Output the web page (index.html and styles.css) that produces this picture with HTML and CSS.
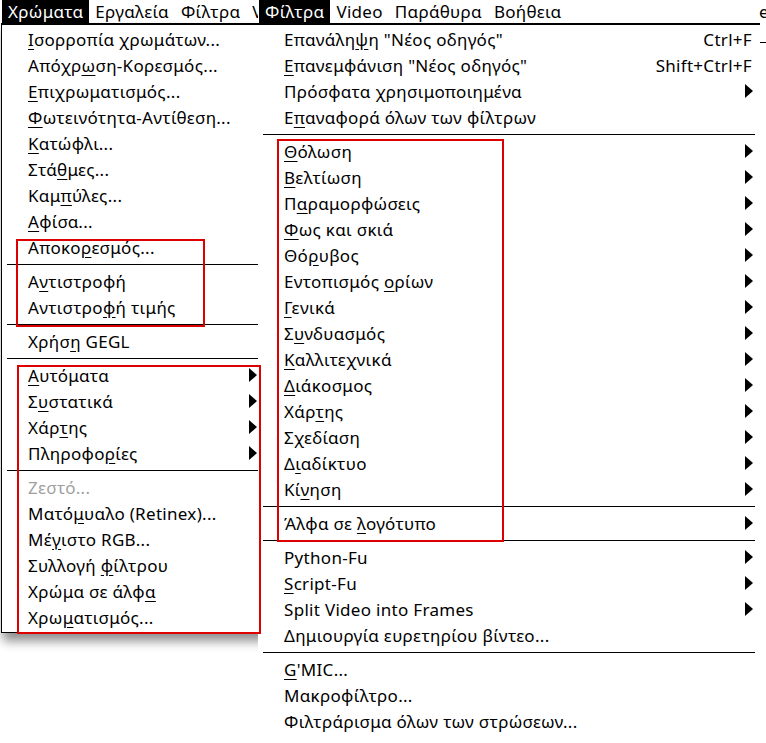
FILE: index.html
```html
<!DOCTYPE html>
<html lang="el">
<head>
    <meta charset="UTF-8">
    <title>GIMP - Χρώματα / Φίλτρα</title>
    <link rel="stylesheet" href="styles.css">
</head>
<body>
    <div class="canvas">
        <!-- αριστερό στιγμιότυπο: μενού Χρώματα -->
        <div class="shot shot-left">
            <div class="menubar">
                <span class="mb-item active">Χρώματα</span>
                <span class="mb-item">Εργαλεία</span>
                <span class="mb-item">Φίλτρα</span>
                <span class="mb-item">Video</span>
            </div>
            <div class="menu menu-left">
                <div class="item"><span><u>Ι</u>σορροπία χρωμάτων...</span></div>
                <div class="item"><span>Απόχρ<u>ω</u>ση-Κορεσμός...</span></div>
                <div class="item"><span><u>Ε</u>πιχρωματισμός...</span></div>
                <div class="item"><span><u>Φ</u>ωτεινότητα-Αντίθεση...</span></div>
                <div class="item"><span><u>Κ</u>ατώφλι...</span></div>
                <div class="item"><span>Στά<u>θ</u>μες...</span></div>
                <div class="item"><span>Καμ<u>π</u>ύλες...</span></div>
                <div class="item"><span><u>Α</u>φίσα...</span></div>
                <div class="item"><span>Αποκο<u>ρ</u>εσμός...</span></div>
                <div class="sep"></div>
                <div class="item"><span>Α<u>ν</u>τιστροφή</span></div>
                <div class="item"><span>Αντιστρο<u>φ</u>ή τιμής</span></div>
                <div class="sep"></div>
                <div class="item"><span>Χρήσ<u>η</u> GEGL</span></div>
                <div class="sep"></div>
                <div class="item"><span><u>Α</u>υτόματα</span><i class="arrow"></i></div>
                <div class="item"><span>Σ<u>υ</u>στατικά</span><i class="arrow"></i></div>
                <div class="item"><span>Χάρ<u>τ</u>ης</span><i class="arrow"></i></div>
                <div class="item"><span>Πληροφο<u>ρ</u>ίες</span><i class="arrow"></i></div>
                <div class="sep"></div>
                <div class="item disabled"><span>Ζεστό...</span></div>
                <div class="item"><span>Ματό<u>μ</u>υαλο (Retinex)...</span></div>
                <div class="item"><span>Μέ<u>γ</u>ιστο RGB...</span></div>
                <div class="item"><span>Συλλογή <u>φ</u>ίλτρου</span></div>
                <div class="item"><span>Χρώμα σε άλφ<u>α</u></span></div>
                <div class="item"><span>Χρω<u>μ</u>ατισμός...</span></div>
            </div>
        </div>

        <!-- δεξί στιγμιότυπο: μενού Φίλτρα -->
        <div class="shot shot-right">
            <div class="menubar">
                <span class="mb-item active">Φίλτρα</span>
                <span class="mb-item">Video</span>
                <span class="mb-item">Παράθυρα</span>
                <span class="mb-item">Βοήθεια</span>
                <span class="mb-tail">e</span>
            </div>
            <div class="right-body">
                <div class="menu menu-right">
                    <div class="item"><span>Επανάλη<u>ψ</u>η "Νέος οδηγός"</span><span class="accel">Ctrl+F</span></div>
                    <div class="item"><span><u>Ε</u>πανεμφάνιση "Νέος οδηγός"</span><span class="accel">Shift+Ctrl+F</span></div>
                    <div class="item"><span>Πρόσφατα χρησιμοποιημένα</span><i class="arrow"></i></div>
                    <div class="item"><span>Ε<u>π</u>αναφορά όλων των φίλτρων</span></div>
                    <div class="sep"></div>
                    <div class="item"><span><u>Θ</u>όλωση</span><i class="arrow"></i></div>
                    <div class="item"><span><u>Β</u>ελτίωση</span><i class="arrow"></i></div>
                    <div class="item"><span>Π<u>α</u>ραμορφώσεις</span><i class="arrow"></i></div>
                    <div class="item"><span><u>Φ</u>ως και σκιά</span><i class="arrow"></i></div>
                    <div class="item"><span>Θό<u>ρ</u>υβος</span><i class="arrow"></i></div>
                    <div class="item"><span>Εντοπισμός <u>ο</u>ρίων</span><i class="arrow"></i></div>
                    <div class="item"><span><u>Γ</u>ενικά</span><i class="arrow"></i></div>
                    <div class="item"><span>Σ<u>υ</u>νδυασμός</span><i class="arrow"></i></div>
                    <div class="item"><span><u>Κ</u>αλλιτεχνικά</span><i class="arrow"></i></div>
                    <div class="item"><span><u>Δ</u>ιάκοσμος</span><i class="arrow"></i></div>
                    <div class="item"><span>Χάρ<u>τ</u>ης</span><i class="arrow"></i></div>
                    <div class="item"><span>Σ<u>χ</u>εδίαση</span><i class="arrow"></i></div>
                    <div class="item"><span>Δ<u>ι</u>αδίκτυο</span><i class="arrow"></i></div>
                    <div class="item"><span>Κί<u>ν</u>ηση</span><i class="arrow"></i></div>
                    <div class="sep"></div>
                    <div class="item"><span>Άλφα σε <u>λ</u>ογότυπο</span><i class="arrow"></i></div>
                    <div class="sep"></div>
                    <div class="item"><span>Python-Fu</span><i class="arrow"></i></div>
                    <div class="item"><span><u>S</u>cript-Fu</span><i class="arrow"></i></div>
                    <div class="item"><span>Split Video into Frames</span><i class="arrow"></i></div>
                    <div class="item"><span>Δημιουργία ευρετηρίου βίντεο...</span></div>
                    <div class="sep"></div>
                    <div class="item"><span><u>G</u>'MIC...</span></div>
                    <div class="item"><span>Μακροφίλτρο...</span></div>
                    <div class="item"><span>Φιλτράρισμα όλων των στρώσεων...</span></div>
                </div>
                <div class="edge"></div>
            </div>
        </div>

        <!-- σημάνσεις -->
        <div class="mark mark-a"></div>
        <div class="mark mark-b"></div>
        <div class="mark mark-c"></div>
    </div>
</body>
</html>
```

FILE: styles.css
```css
body {
    margin: 0;
    padding: 0;
    background-color: white;
    color: #000;
    font-family: "Noto Sans", "DejaVu Sans", sans-serif;
    font-size: 17px;
    letter-spacing: 0.3px;
}

.canvas {
    position: relative;
    display: flex;
    width: 766px;
    height: 743px;
    overflow: hidden;
    background-color: white;
}

.shot {
    display: flex;
    flex-direction: column;
}

.shot-left {
    width: 258px;
    flex: none;
}

.shot-right {
    flex: 1;
    position: relative;
    z-index: 1;
    background-color: white;
}

/* γραμμή μενού */
.menubar {
    display: flex;
    height: 23px;
    line-height: 23px;
    white-space: nowrap;
    padding-left: 2px;
    overflow: hidden;
}

.shot-right .menubar {
    padding-left: 1px;
}

.mb-item {
    padding: 0 6px;
}

.mb-item.active {
    background-color: #000;
    color: white;
}

.mb-tail {
    margin-left: auto;
    width: 7px;
    overflow: hidden;
}

/* μενού */
.menu {
    border-top: 2px solid #000;
    padding: 1px 0 0;
    background-color: white;
}

.menu-left {
    width: 262px;
    margin-left: 1px;
    border-left: 1px solid #000;
    border-bottom: 1px solid #000;
    padding-bottom: 2px;
    box-shadow: 2px 8px 10px rgba(0, 0, 0, 0.45);
}

.right-body {
    display: flex;
}

.menu-right {
    width: 502px;
}

.edge {
    flex: 1;
    margin-top: 17px;
    height: 1px;
    background-color: #000;
    border-top: 2px solid transparent;
    background-clip: content-box;
}

.item {
    display: flex;
    align-items: center;
    justify-content: space-between;
    height: 26px;
    white-space: nowrap;
}

.menu-left .item {
    padding: 0 7px 0 26px;
}

.menu-right .item {
    padding: 0 7px 0 26px;
}

.item u {
    text-underline-offset: 3px;
}

.item.disabled {
    color: #a0a0a0;
}

.accel {
    margin-right: 1px;
}

.arrow {
    width: 0;
    height: 0;
    border-left: 8px solid #000;
    border-top: 7px solid transparent;
    border-bottom: 7px solid transparent;
}

.sep {
    height: 1px;
    margin: 4px 5px 3px;
    background-color: #000;
}

/* κόκκινα πλαίσια σημάνσεων */
.mark {
    position: absolute;
    border: 2px solid #dd0000;
    z-index: 2;
}

.mark-a {
    left: 16px;
    top: 239px;
    width: 185px;
    height: 84px;
}

.mark-b {
    left: 17px;
    top: 365px;
    width: 240px;
    height: 265px;
}

.mark-c {
    left: 277px;
    top: 139px;
    width: 223px;
    height: 399px;
}
```
